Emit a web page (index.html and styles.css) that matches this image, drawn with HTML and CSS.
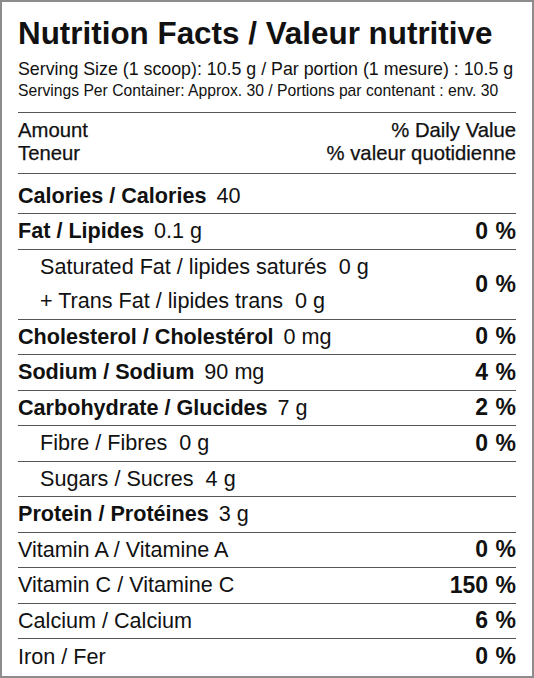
FILE: index.html
```html
<!DOCTYPE html>
<html lang="en">
<head>
    <title>Nutrition Facts</title>
    <link rel="stylesheet" href="styles.css">
</head>
<body>

<div class="label">
    <h1 class="title">Nutrition Facts / Valeur nutritive</h1>
    <div class="serving">Serving Size (1 scoop): 10.5 g / Par portion (1 mesure) : 10.5 g</div>
    <div class="servings">Servings Per Container: Approx. 30 / Portions par contenant : env. 30</div>

    <div class="head">
        <div class="head-line"><span>Amount</span><span>% Daily Value</span></div>
        <div class="head-line"><span>Teneur</span><span>% valeur quotidienne</span></div>
    </div>

    <div class="calories"><b>Calories / Calories</b> 40</div>

    <div class="row"><span><b>Fat / Lipides</b> 0.1 g</span><b class="dv">0 %</b></div>
    <div class="row double">
        <div class="sub">
            <span>Saturated Fat / lipides saturés&nbsp; 0 g</span>
            <span>+ Trans Fat / lipides trans&nbsp; 0 g</span>
        </div>
        <b class="dv">0 %</b>
    </div>
    <div class="row"><span><b>Cholesterol / Cholestérol</b> 0 mg</span><b class="dv">0 %</b></div>
    <div class="row"><span><b>Sodium / Sodium</b> 90 mg</span><b class="dv">4 %</b></div>
    <div class="row"><span><b>Carbohydrate / Glucides</b> 7 g</span><b class="dv">2 %</b></div>
    <div class="row indent"><span>Fibre / Fibres&nbsp; 0 g</span><b class="dv">0 %</b></div>
    <div class="row indent"><span>Sugars / Sucres&nbsp; 4 g</span></div>
    <div class="row"><span><b>Protein / Protéines</b> 3 g</span></div>
    <div class="row"><span>Vitamin A / Vitamine A</span><b class="dv">0 %</b></div>
    <div class="row"><span>Vitamin C / Vitamine C</span><b class="dv">150 %</b></div>
    <div class="row"><span>Calcium / Calcium</span><b class="dv">6 %</b></div>
    <div class="row last"><span>Iron / Fer</span><b class="dv">0 %</b></div>
</div>

</body>
</html>
```

FILE: styles.css
```css
body { margin: 0; font-family: "Liberation Sans", Arial, sans-serif; color: #111; background: white; }
.label { width: 534px; height: 678px; box-sizing: border-box; border: 2px solid #8c8c8c; padding: 14px 16px 0 16px; }
.title { font-size: 31.4px; font-weight: bold; line-height: 36px; margin: 0 0 6px 0; white-space: nowrap; }
.serving { font-size: 17.8px; line-height: 22px; white-space: nowrap; }
.servings { font-size: 15.7px; line-height: 22px; white-space: nowrap; }
.head { margin-top: 10px; border-top: 1px solid #555; border-bottom: 1px solid #555; padding: 6px 0 8px 0; font-size: 20.3px; line-height: 23px; -webkit-text-stroke: 0.25px #111; }
.head-line { display: flex; justify-content: space-between; }
.calories { font-size: 21.6px; height: 40px; line-height: 44px; box-sizing: border-box; border-bottom: 1px solid #555; }
.calories b { margin-right: 4px; }
.row { display: flex; justify-content: space-between; align-items: center; height: 35.5px; box-sizing: border-box; border-bottom: 1px solid #555; font-size: 21.6px; white-space: nowrap; }
.row span b { margin-right: 4px; }
.dv { font-size: 23px; word-spacing: 1px; }
.row.double { height: 70px; }
.sub { display: flex; flex-direction: column; padding-left: 22px; line-height: 34px; }
.indent { padding-left: 22px; }
.row.last { border-bottom: none; }
```
